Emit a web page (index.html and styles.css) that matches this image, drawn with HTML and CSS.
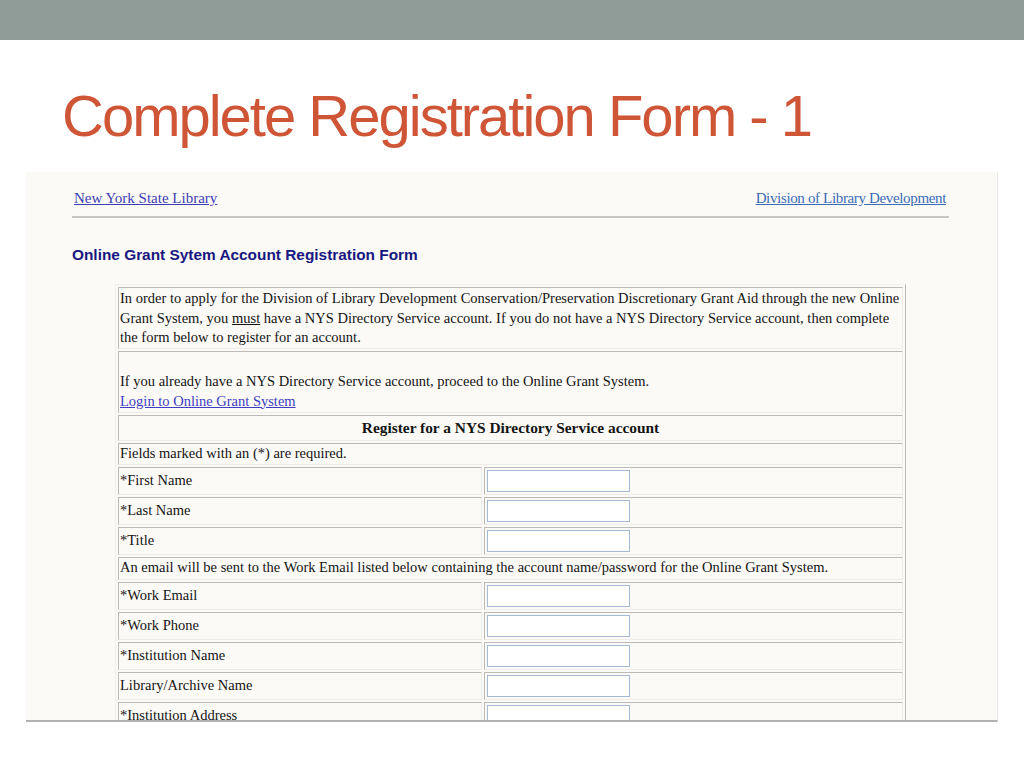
FILE: index.html
```html
<!DOCTYPE html>
<html>
<head>
<meta charset="utf-8">
<title>Complete Registration Form - 1</title>
<link rel="stylesheet" href="styles.css">
</head>
<body>
<div class="topbar"></div>
<h1 class="title">Complete Registration Form - 1</h1>
<div class="shot">
  <div class="header">
    <a class="link-nysl" href="#">New York State Library</a>
    <a class="link-dld" href="#">Division of Library Development</a>
  </div>
  <div class="rule"></div>
  <h2 class="form-heading">Online Grant Sytem Account Registration Form</h2>
  <table class="reg">
    <colgroup>
      <col class="c-lab">
      <col class="c-fld">
    </colgroup>
    <tr>
      <td colspan="2" class="para r-intro">In order to apply for the Division of Library Development Conservation/Preservation Discretionary Grant Aid through the new Online<br>Grant System, you <u>must</u> have a NYS Directory Service account. If you do not have a NYS Directory Service account, then complete<br>the form below to register for an account.</td>
    </tr>
    <tr>
      <td colspan="2" class="para r-login"><br>If you already have a NYS Directory Service account, proceed to the Online Grant System.<br><a class="link-login" href="#">Login to Online Grant System</a></td>
    </tr>
    <tr>
      <td colspan="2" class="r-head">Register for a NYS Directory Service account</td>
    </tr>
    <tr>
      <td colspan="2" class="r-note1">Fields marked with an (*) are required.</td>
    </tr>
    <tr>
      <td class="lab">*First Name</td>
      <td class="fld"><input type="text" class="inp"></td>
    </tr>
    <tr>
      <td class="lab">*Last Name</td>
      <td class="fld"><input type="text" class="inp"></td>
    </tr>
    <tr>
      <td class="lab">*Title</td>
      <td class="fld"><input type="text" class="inp"></td>
    </tr>
    <tr>
      <td colspan="2" class="r-note2">An email will be sent to the Work Email listed below containing the account name/password for the Online Grant System.</td>
    </tr>
    <tr>
      <td class="lab">*Work Email</td>
      <td class="fld"><input type="text" class="inp"></td>
    </tr>
    <tr>
      <td class="lab">*Work Phone</td>
      <td class="fld"><input type="text" class="inp"></td>
    </tr>
    <tr>
      <td class="lab">*Institution Name</td>
      <td class="fld"><input type="text" class="inp"></td>
    </tr>
    <tr>
      <td class="lab">Library/Archive Name</td>
      <td class="fld"><input type="text" class="inp"></td>
    </tr>
    <tr>
      <td class="lab">*Institution Address</td>
      <td class="fld"><input type="text" class="inp"></td>
    </tr>
  </table>
</div>
</body>
</html>
```
FILE: styles.css
```css
html, body {
  margin: 0;
  padding: 0;
  background: #ffffff;
}
body {
  width: 1024px;
  height: 768px;
  overflow: hidden;
  font-family: "Liberation Sans", Arial, sans-serif;
}
.topbar {
  height: 40px;
  background: #909c97;
}
.title {
  margin: 45px 0 0 62px;
  height: 61px;
  font-family: "Liberation Sans", Arial, sans-serif;
  font-weight: normal;
  font-size: 58px;
  line-height: 61px;
  letter-spacing: -2px;
  color: #cf5537;
  white-space: nowrap;
}
.shot {
  margin: 26px 0 0 26px;
  height: 548px;
  background: #fcfaf7;
  border-bottom: 2px solid #b2b2b2;
  border-right: 1px solid #e9e7e3;
  overflow: hidden;
  padding-left: 46px;
  box-sizing: content-box;
  width: 925px;
}
.header {
  width: 877px;
  padding-top: 17px;
  display: flex;
  justify-content: space-between;
  font-family: "Liberation Serif", "Times New Roman", serif;
  font-size: 15px;
  line-height: 18px;
}
.header a {
  text-decoration: underline;
  white-space: nowrap;
}
.link-nysl {
  color: #3d3db4;
  margin-left: 2px;
}
.link-dld {
  color: #3a6cb6;
  margin-right: 3px;
  letter-spacing: -0.35px;
}
.rule {
  width: 877px;
  margin-top: 9px;
  border-top: 2px solid #c9c7c3;
}
.form-heading {
  margin: 28px 0 0 0;
  font-family: "Liberation Sans", Arial, sans-serif;
  font-weight: bold;
  font-size: 15.4px;
  line-height: 18px;
  color: #17177f;
  white-space: nowrap;
}
.reg {
  margin: 20px 0 0 43px;
  width: 791px;
  table-layout: fixed;
  border-collapse: separate;
  border-spacing: 2px;
  border: 1px solid;
  border-color: #f2f0ec #b9b9b9 #b9b9b9 #f2f0ec;
  font-family: "Liberation Serif", "Times New Roman", serif;
  font-size: 14.5px;
  line-height: 19.5px;
  color: #141414;
}
.c-lab {
  width: 364px;
}
.c-fld {
  width: 419px;
}
.reg td {
  box-sizing: border-box;
  border: 1px solid;
  border-color: #bdbbb7 #eeece8 #eeece8 #bdbbb7;
  padding: 0 1px;
  vertical-align: middle;
  white-space: nowrap;
  overflow: hidden;
}
.reg td.para {
  vertical-align: top;
  padding-top: 1px;
}
.r-intro {
  height: 61px;
}
.r-login {
  height: 62px;
}
.r-head {
  height: 26px;
  text-align: center;
  font-weight: bold;
  font-size: 15.4px;
}
.r-note1 {
  height: 22px;
}
.r-note2 {
  height: 23px;
}
.lab {
  height: 28px;
}
.fld {
  height: 28px;
}
.link-login {
  color: #3d3dc0;
  text-decoration: underline;
}
.inp {
  display: block;
  box-sizing: border-box;
  width: 143px;
  height: 22px;
  margin: 0 0 0 1px;
  padding: 0;
  border: 1px solid #a7bad3;
  background: #ffffff;
  outline: none;
}
```
